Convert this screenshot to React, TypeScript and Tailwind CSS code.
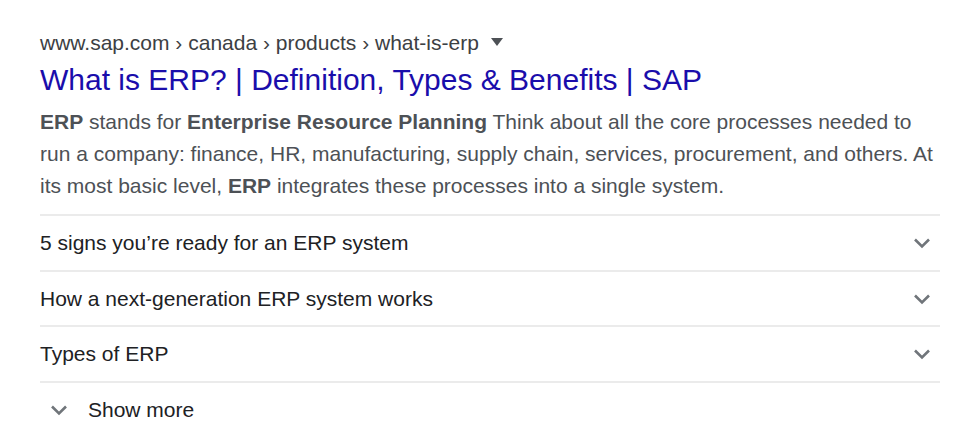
import React from "react";

const Chevron = ({ className = "" }: { className?: string }) => (
  <svg viewBox="0 0 24 24" width="24" height="24" className={className} fill="none">
    <path d="M5 8.5l7 7 7-7" stroke="#70757a" strokeWidth="2.6" />
  </svg>
);

const rows = [
  { t: "5 signs you\u2019re ready for an ERP system", h: "h-[56px]" },
  { t: "How a next-generation ERP system works", h: "h-[55px]" },
  { t: "Types of ERP", h: "h-[56px]" },
];

export default function App() {
  return (
    <div className="w-[965px] h-[444px] bg-white" style={{ fontFamily: '"Liberation Sans", Arial, sans-serif' }}>
      <div className="pl-[40px] pt-[29px] w-[940px]">
        <div className="flex items-center h-[28px] text-[21px] text-[#3c4043]">
          <span>www.sap.com › canada › products › what-is-erp</span>
          <svg width="12" height="8" viewBox="0 0 12 8" className="ml-[12px] mb-[3px]">
            <path d="M0 0h12L6 8z" fill="#4d5156" />
          </svg>
        </div>
        <div className="mt-[5px] h-[36px] leading-[36px] text-[30px] text-[#1a0dab]">
          What is ERP? | Definition, Types &amp; Benefits | SAP
        </div>
        <div className="mt-[8px] text-[21px] leading-[32px] text-[#4d5156]">
          <b className="font-bold">ERP</b> stands for <b className="font-bold">Enterprise Resource Planning</b> Think about all the core processes needed to run a company: finance, HR, manufacturing, supply chain, services, procurement, and others. At its most basic level, <b className="font-bold">ERP</b> integrates these processes into a single system.
        </div>
        <div className="mt-[12px]">
          {rows.map((r) => (
            <div key={r.t} className={`border-t-2 border-[#ebebeb] ${r.h} flex items-center justify-between text-[21px] text-[#202124]`}>
              <span>{r.t}</span>
              <Chevron className="mr-[6px]" />
            </div>
          ))}
          <div className="border-t-2 border-[#ebebeb] h-[56px] flex items-center text-[21px] text-[#202124]">
            <Chevron className="ml-[7px]" />
            <span className="ml-[17px]">Show more</span>
          </div>
        </div>
      </div>
    </div>
  );
}
